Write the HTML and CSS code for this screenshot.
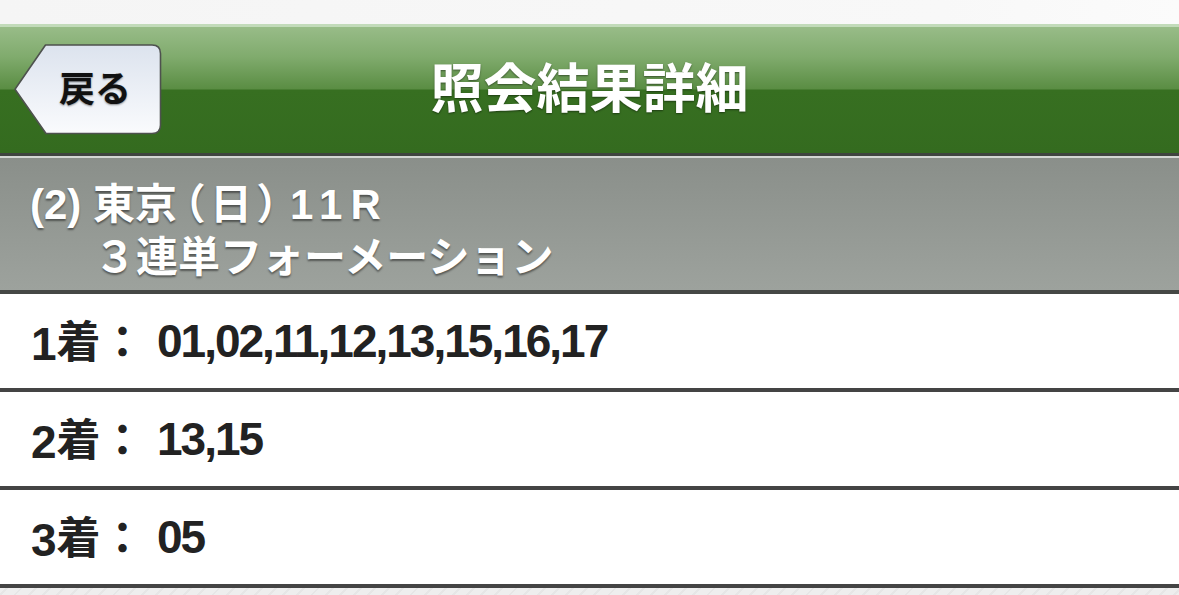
FILE: index.html
```html
<!DOCTYPE html>
<html lang="ja">
<head>
<meta charset="utf-8">
<title>照会結果詳細</title>
<link rel="stylesheet" href="styles.css">
</head>
<body>
<div class="topbar"></div>
<header class="navbar">
  <a class="back" href="#">
    <svg class="back-shape" width="148" height="91" viewBox="0 0 148 91" aria-hidden="true">
      <defs>
        <linearGradient id="bg" x1="0" y1="0" x2="0" y2="1">
          <stop offset="0" stop-color="#dce3ee"/>
          <stop offset="1" stop-color="#fafbfd"/>
        </linearGradient>
      </defs>
      <path d="M31.5 1 L138 1 Q146.5 1 146.5 9.5 L146.5 81 Q146.5 89.5 138 89.5 L32 89.5 L1 45.2 Z" fill="url(#bg)" stroke="#4e524e" stroke-width="1.6" stroke-linejoin="round"/>
    </svg>
    <span class="back-label">戻る</span>
  </a>
  <h1 class="title">照会結果詳細</h1>
</header>
<section class="subheader">
  <div class="sub-line">(2) <span class="cjk">東京</span><span class="cjk paren">（日）</span><span class="race">11R</span></div>
  <div class="sub-line sub-indent">３連単フォーメーション</div>
</section>
<ul class="rows">
  <li class="row"><span class="label">1<span class="cjk">着：</span></span><span class="values">01,02,11,12,13,15,16,17</span></li>
  <li class="row"><span class="label">2<span class="cjk">着：</span></span><span class="values">13,15</span></li>
  <li class="row"><span class="label">3<span class="cjk">着：</span></span><span class="values">05</span></li>
</ul>
</body>
</html>
```
FILE: styles.css
```css
html, body {
  margin: 0;
  padding: 0;
}
body {
  font-family: "Liberation Sans", "Noto Sans CJK JP", sans-serif;
  background-color: #ebebeb;
  background-image: repeating-linear-gradient(135deg, #e6e6e6 0, #e6e6e6 2px, #eeeeee 2px, #eeeeee 10px);
  min-height: 595px;
}
.cjk {
  font-family: "Noto Sans CJK JP", sans-serif;
}
.topbar {
  height: 24px;
  background: linear-gradient(to right, #f5f5f5, #f8f8f8 80%, #fbfbfb);
}
.navbar {
  height: 126px;
  border-top: 3px solid #c2dbba;
  border-bottom: 3px solid #3f443f;
  background: linear-gradient(to bottom, #98bc88 0, #80ab6d 30px, #5a8d43 62px, #376f21 63px, #346b1f 100%);
  display: grid;
  grid-template-columns: 1fr auto 1fr;
  align-items: center;
}
.back {
  position: relative;
  justify-self: start;
  margin-left: 14px;
  margin-top: -1px;
  width: 148px;
  height: 91px;
  display: flex;
  align-items: center;
  padding-left: 45px;
  box-sizing: border-box;
  text-decoration: none;
}
.back-shape {
  position: absolute;
  left: 0;
  top: 0;
}
.back-label {
  position: relative;
  font-family: "Noto Sans CJK JP", sans-serif;
  font-weight: 700;
  font-size: 36px;
  line-height: 1;
  color: #111;
  text-shadow: 0 1px 2px rgba(0,0,0,0.45);
  margin-top: -7px;
}
.title {
  grid-column: 2;
  margin: 0;
  font-family: "Noto Sans CJK JP", sans-serif;
  font-weight: 700;
  font-size: 53px;
  line-height: 1;
  color: #ffffff;
  text-shadow: 0 1px 2px rgba(0,0,0,0.45);
  margin-top: -10px;
}
.subheader {
  border-top: 2px solid #d3d7d3;
  border-bottom: 4px solid #454845;
  background: linear-gradient(to bottom, #8a8f8a, #9da29d);
  height: 138px;
  box-sizing: border-box;
  padding: 16px 0 10px 30px;
  color: #ffffff;
  font-weight: 700;
  font-size: 42px;
  line-height: 53px;
  text-shadow: 0 2px 2px rgba(0,0,0,0.45);
}
.sub-line {
  white-space: nowrap;
}
.paren {
  font-feature-settings: "palt" 1;
  margin-left: 6px;
  letter-spacing: 6px;
}
.race {
  margin-left: 5px;
  letter-spacing: 8px;
}
.sub-indent {
  padding-left: 64px;
}
.rows {
  list-style: none;
  margin: 0;
  padding: 0;
}
.row {
  height: 94px;
  background: #ffffff;
  border-bottom: 4px solid #444444;
  display: flex;
  align-items: center;
  padding-left: 31px;
  color: #222222;
  font-weight: 700;
  font-size: 46px;
  white-space: nowrap;
}
.label {
  width: 126px;
  flex: none;
}
.label .cjk {
  font-size: 44px;
  position: relative;
  top: -2px;
}
.values {
  letter-spacing: -2px;
}
```
